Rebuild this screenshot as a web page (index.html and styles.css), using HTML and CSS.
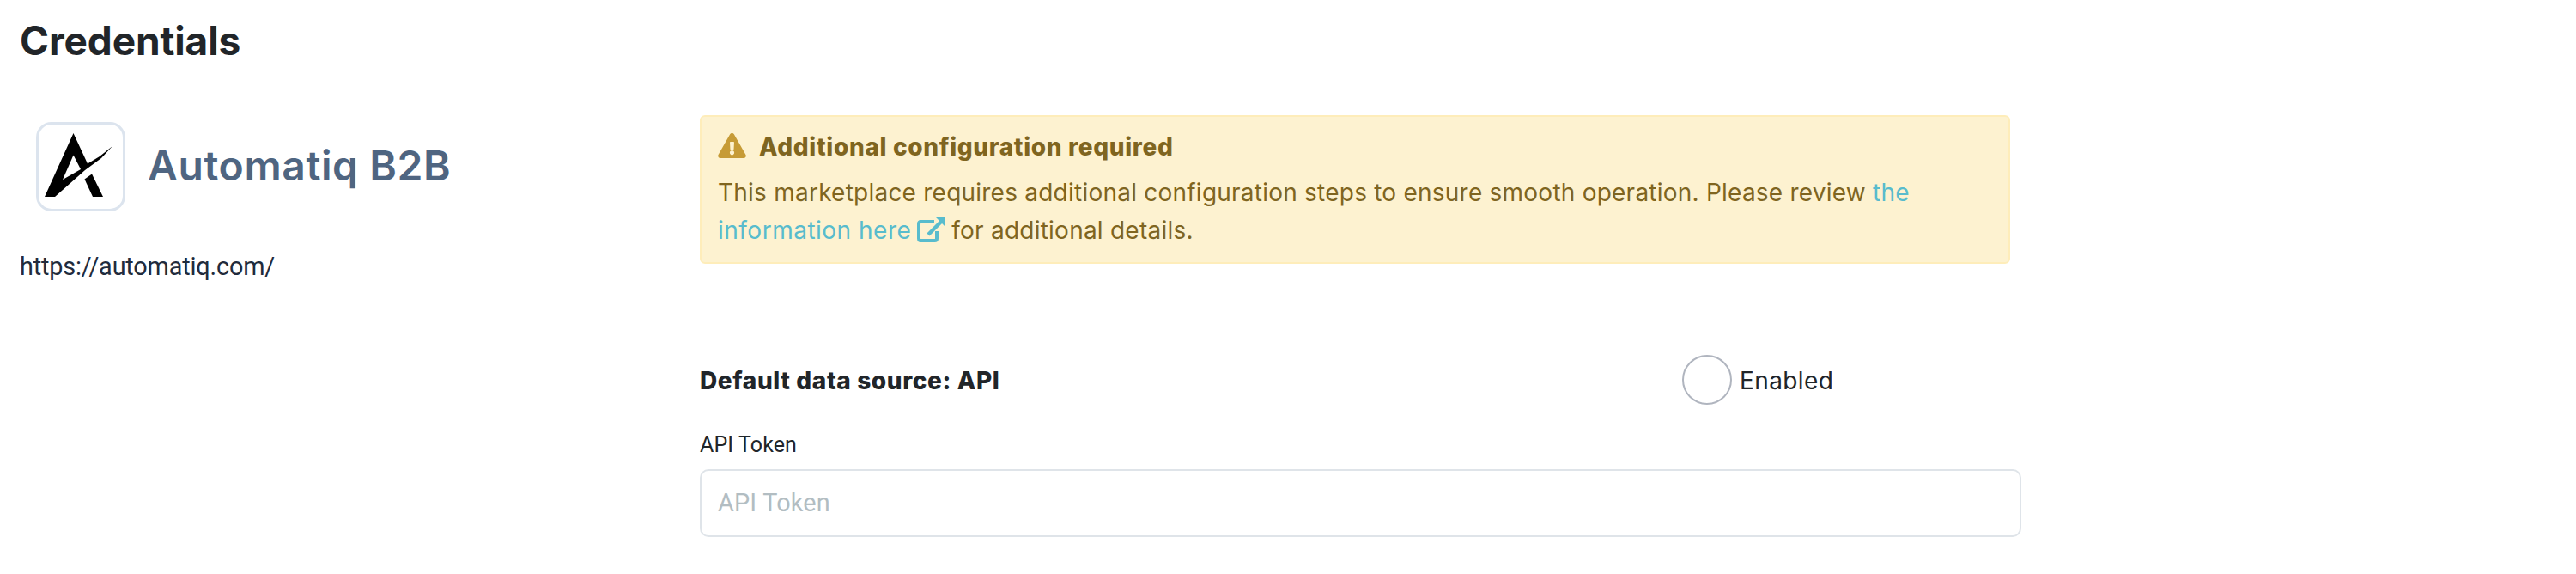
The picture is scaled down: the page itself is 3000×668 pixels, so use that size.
FILE: index.html
```html
<!DOCTYPE html>
<html lang="en"><head><meta charset="utf-8"><title>Credentials</title><link rel="stylesheet" href="styles.css"></head>
<body>
<h1 class="title">Credentials</h1>
<main class="columns">
  <section class="brand">
    <div class="brand-row">
      <div class="logo"><svg viewBox="0 0 98 98" width="98" height="98"><path d="M40.500 10L57 45.500L71 37L86 25L73 39L54 53L19 84H7ZM40.500 35.500L28 64L49 52Z" fill-rule="evenodd"/><path d="M53.500 63.500L62 57.500L75 84H63Z"/></svg></div>
      <span class="brand-name">Automatiq B2B</span>
    </div>
    <div class="url">https://automatiq.com/</div>
  </section>
  <section class="settings">
    <div class="alert">
      <div class="alert-head">
        <svg class="warn" viewBox="0 0 576 512" width="33" height="29"><path fill="#c69b36" d="M569.500 440c18.500 32-4.700 72-41.500 72H48c-36.900 0-60-40.100-41.600-72L246.400 24c18.500-32 64.700-32 83.200 0zM288 354c-25.400 0-46 20.600-46 46s20.600 46 46 46 46-20.600 46-46-20.600-46-46-46zm-43.700-165.300l7.400 136c.4 6.400 5.600 11.300 12 11.300h48.500c6.400 0 11.600-5 12-11.300l7.400-136c.4-6.900-5.100-12.700-12-12.700h-63.400c-6.900 0-12.300 5.800-11.900 12.700z"/></svg>
        <strong>Additional configuration required</strong>
      </div>
      <p class="alert-text">This marketplace requires additional configuration steps to ensure smooth operation. Please review <a>the</a><br><a class="link-end">information here</a><svg class="ext" viewBox="0 0 33 29" width="33" height="29" fill="none" stroke="#58bccd" stroke-width="4"><path d="M20 5H4.500Q2 5 2 7.500V24.500Q2 27 4.500 27H20.500Q23 27 23 24.500V16"/><path d="M13 20L28 5" stroke-width="4.500"/><path d="M22 0H33V11Z" fill="#58bccd" stroke="none"/></svg>for additional details.</p>
    </div>
    <div class="source-row">
      <h2 class="source">Default data source: API</h2>
      <label class="toggle"><i class="circle"></i><span>Enabled</span></label>
    </div>
    <label class="field-label" for="token">API Token</label>
    <input class="field" id="token" placeholder="API Token">
  </section>
</main>
</body></html>
```
FILE: styles.css
```css
* { box-sizing: border-box; }
body { margin: 0; padding: 17px 24px 0; height: 668px; background: #fff; color: #212529; font: 28.8px/43px Roboto, "Noto Sans", sans-serif; }
.title { margin: 0; font: 650 46px/60px Inter, sans-serif; letter-spacing: -.1px; text-indent: -1px; }
.columns { display: grid; grid-template-columns: 791px 1539px; margin-top: 57px; }
.brand-row { display: flex; align-items: center; gap: 26px; margin: 8px 0 0 18px; }
.logo { width: 104px; height: 104px; border: 3px solid #dce4ee; border-radius: 18px; }
.logo svg { display: block; }
.brand-name { padding-bottom: 2px; color: #4f6581; font: 600 48px/60px Inter, sans-serif; letter-spacing: .6px; }
.url { margin-top: 43px; color: #212b3c; letter-spacing: -.15px; text-indent: -1px; }
.alert { width: 1526px; height: 173px; padding: 14px 19px; border: 2px solid #feedba; border-radius: 6px; background: #fdf2d0; color: #7f651f; font-family: Inter, sans-serif; font-size: 28px; }
.alert-head { display: flex; gap: 15px; height: 43px; }
.alert-head strong { font-weight: 800; letter-spacing: .67px; }
.warn { margin-top: 5px; }
.alert-text { margin: 10px 0 0; white-space: nowrap; letter-spacing: .23px; line-height: 43.5px; }
.alert-text a { color: #58bccd; }
.alert-text .link-end { letter-spacing: .5px; }
.ext { margin: 0 7px 0 7px; vertical-align: -4px; }
.source-row { display: flex; align-items: center; height: 58px; margin-top: 106px; font-family: Inter, sans-serif; font-size: 28px; }
.source { width: 1144px; margin: 2px 0 0; font-size: 28px; font-weight: 800; letter-spacing: .62px; }
.toggle { display: flex; align-items: center; gap: 9px; }
.toggle span { margin-top: 2px; letter-spacing: .4px; }
.circle { width: 58px; height: 58px; border: 2px solid #b0b5bf; border-radius: 50%; }
.field-label { display: block; margin-top: 29px; font-size: 25px; line-height: 36px; letter-spacing: .1px; }
.field { display: block; width: 1539px; height: 79px; margin-top: 10px; padding: 0 19px 2px; border: 2px solid #dfe4e9; border-radius: 10px; background: #fff; font: inherit; color: #212529; letter-spacing: .2px; }
.field::placeholder { color: #b2bdc2; opacity: 1; }
```
